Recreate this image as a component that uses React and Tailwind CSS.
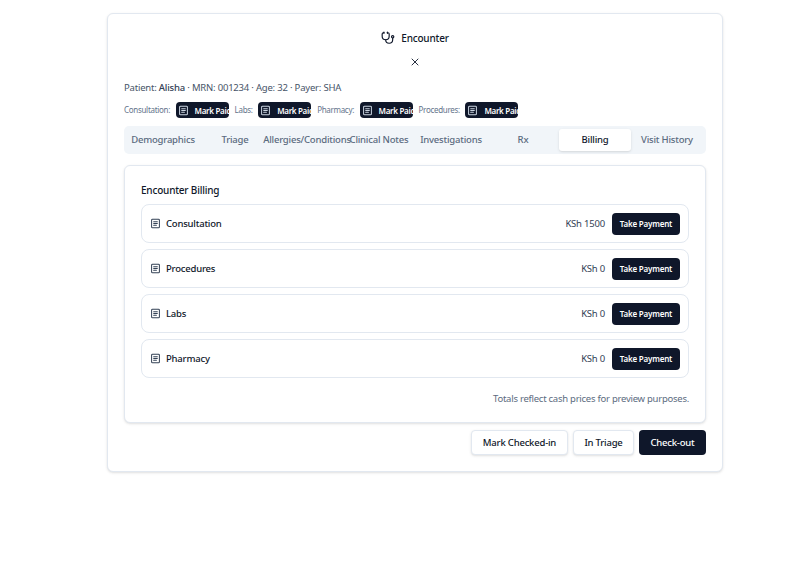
import React from 'react';
import { Stethoscope, X } from 'lucide-react';

const tabs = ['Demographics', 'Triage', 'Allergies/Conditions', 'Clinical Notes', 'Investigations', 'Rx', 'Billing', 'Visit History'];
const lines = [
  { name: 'Consultation', amount: 'KSh 1500' },
  { name: 'Procedures', amount: 'KSh 0' },
  { name: 'Labs', amount: 'KSh 0' },
  { name: 'Pharmacy', amount: 'KSh 0' },
];
const paid = ['Consultation:', 'Labs:', 'Pharmacy:', 'Procedures:'];

const DocIcon = ({ className }) => (
  <svg viewBox="0 0 24 24" fill="none" stroke="currentColor" strokeWidth="2.2" strokeLinecap="round" className={className}>
    <rect x="3.5" y="2.5" width="17" height="19" rx="2" />
    <path d="M8 8h8M8 12h8M8 16h6" />
  </svg>
);

function MarkPaid() {
  return (
    <button className="flex h-[16px] w-[53px] items-center overflow-hidden rounded-[4px] bg-[#0f172a] pl-[2px] text-[8px] font-semibold tracking-[-0.3px] whitespace-nowrap text-white">
      <DocIcon className="h-[11px] w-[11px] shrink-0 text-[#cbd5e1]" />
      <span className="ml-[6px] pt-[1px]">Mark Paid</span>
    </button>
  );
}

export default function App() {
  return (
    <div className="min-h-[582px] bg-white pt-[13px] pl-[107px] tracking-[-0.2px] text-[#0f172a]" style={{ fontFamily: "'Noto Sans', sans-serif" }}>
      <div className="w-[616px] rounded-[6px] border border-[#e2e8f0] bg-white px-4 pt-4 pb-4 shadow-sm">
        <div className="flex h-[16px] items-center justify-center gap-[6px] text-[10px] font-medium">
          <Stethoscope size={14} strokeWidth={2} />
          <span className="pt-[1px]">Encounter</span>
        </div>
        <div className="mt-[10px] flex h-[14px] justify-center">
          <X size={12} strokeWidth={1.8} />
        </div>
        <p className="mt-[11px] h-[14px] text-[9.5px] leading-[14px] text-[#475569]">
          Patient: <span className="font-medium text-[#334155]">Alisha</span> · MRN: 001234 · Age: 32 · Payer: SHA
        </p>
        <div className="mt-[7px] flex h-[16px] items-center">
          {paid.map((p) => (
            <div key={p} className="mr-[6px] flex items-center gap-[5.5px]">
              <span className="text-[8px] tracking-[-0.3px] text-[#64748b]">{p}</span>
              <MarkPaid />
            </div>
          ))}
        </div>
        <div className="mt-[8px] grid h-[28px] grid-cols-8 rounded-[5px] bg-[#f1f5f9] p-[3px]">
          {tabs.map((t) => (
            <div
              key={t}
              className={`flex items-center justify-center rounded-[3px] pt-[1px] text-[9.5px] font-medium whitespace-nowrap ${t === 'Billing' ? 'bg-white text-[#0f172a] shadow-sm' : 'text-[#5b6b80]'}`}
            >
              {t}
            </div>
          ))}
        </div>
        <div className="mt-[11px] rounded-[6px] border border-[#e2e8f0] bg-white px-4 pt-4 pb-[16px] shadow-sm">
          <h3 className="h-[16px] text-[10px] leading-[16px] font-medium">Encounter Billing</h3>
          <div className="mt-[6px] flex flex-col gap-[6px]">
            {lines.map((l) => (
              <div key={l.name} className="flex h-[39px] items-center justify-between rounded-[8px] border border-[#e2e8f0] pr-2 pl-2">
                <div className="flex items-center gap-[5px] text-[9.5px] font-medium">
                  <DocIcon className="h-[11px] w-[11px] text-[#334155]" />
                  <span className="pt-[1px]">{l.name}</span>
                </div>
                <div className="flex items-center gap-[7px]">
                  <span className="pt-[1px] text-[9.5px] text-[#334155]">{l.amount}</span>
                  <button className="h-[22px] w-[68px] rounded-[4px] bg-[#0f172a] text-[8px] font-semibold text-white">Take Payment</button>
                </div>
              </div>
            ))}
          </div>
          <p className="mt-[14px] text-right text-[9.5px] leading-[14px] tracking-[-0.25px] text-[#5b6b80]">Totals reflect cash prices for preview purposes.</p>
        </div>
        <div className="mt-[7px] flex justify-end gap-[5px]">
          <button className="h-[25px] w-[97px] rounded-[4px] border border-[#e2e8f0] bg-white pt-[2px] text-[9.5px] font-medium shadow-sm">Mark Checked-in</button>
          <button className="h-[25px] w-[61px] rounded-[4px] border border-[#e2e8f0] bg-white pt-[2px] text-[9.5px] font-medium shadow-sm">In Triage</button>
          <button className="h-[25px] w-[67px] rounded-[4px] bg-[#0f172a] pt-[2px] text-[9.5px] font-medium text-white">Check-out</button>
        </div>
      </div>
    </div>
  );
}
